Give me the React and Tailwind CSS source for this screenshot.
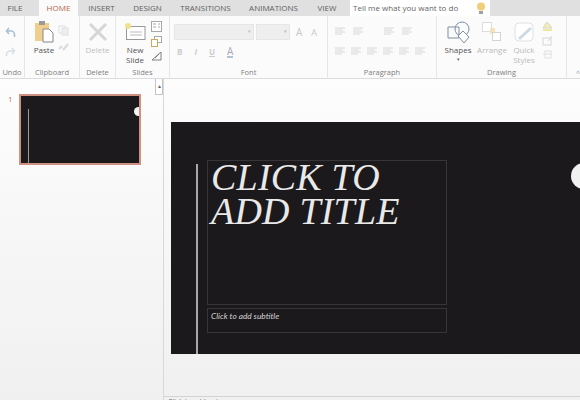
const F = { fontFamily: '"Open Sans","Noto Sans",sans-serif' };

function Tab({ children, active, w, cls = "" }) {
  return (
    <div className={"flex items-center justify-center h-full text-[8px] " + (active ? "bg-[#fbfbfb] text-[#b5634c] " : "text-[#5f5f5f] ") + cls} style={{ width: w }}>
      {children}
    </div>
  );
}

function Group({ w, label, children, last }) {
  return (
    <div className={"relative flex flex-col h-full shrink-0 " + (last ? "" : "border-r border-[#e6e6e6]")} style={{ width: w }}>
      <div className="flex-1 min-h-0 flex">{children}</div>
      <div className="h-[11px] shrink-0 text-center text-[7.5px] leading-[11px] text-[#808080]">{label}</div>
    </div>
  );
}

const Big = ({ children, label, w = 30, color = "text-[#555]", caret }) => (
  <div className="flex flex-col items-center pt-[4px] shrink-0" style={{ width: w }}>
    <div className="h-[24px] shrink-0 flex items-center justify-center">{children}</div>
    <div className={"text-[8px] leading-[10px] text-center mt-[1px] shrink-0 " + color}>{label}</div>
    {caret && <div className="text-[5px] leading-[8px] text-[#666] shrink-0">▾</div>}
  </div>
);

const Bars = ({ c = "#d8d8d8" }) => (
  <svg width="10" height="8" viewBox="0 0 10 8" stroke={c} strokeWidth="1"><path d="M0 1h10M0 3h8M0 5h10M0 7h7" /></svg>
);

export default function App() {
  return (
    <div className="w-[580px] h-[400px] overflow-hidden flex flex-col bg-[#f1f1f1]" style={F}>
      <div className="h-[16px] shrink-0 bg-[#e0e0e0] flex items-stretch">
        <Tab w={30}>FILE</Tab>
        <div className="w-[9px]" />
        <Tab active w={39}>HOME</Tab>
        <Tab w={47}>INSERT</Tab>
        <Tab w={45}>DESIGN</Tab>
        <Tab w={71}>TRANSITIONS</Tab>
        <Tab w={65}>ANIMATIONS</Tab>
        <Tab w={42}>VIEW</Tab>
        <div className="w-[2px]" />
        <div className="w-[140px] bg-white flex items-center justify-between pl-[3px] pr-[4px] text-[8px] text-[#666]">
          <span>Tell me what you want to do</span>
          <svg width="10" height="13" viewBox="0 0 10 13"><circle cx="5" cy="4.500" r="4" fill="#f2cd7a" /><rect x="3" y="9" width="4" height="3" fill="#a0a0a0" /></svg>
        </div>
      </div>

      <div className="h-[63px] shrink-0 bg-[#fbfbfb] border-b border-[#dcdcdc] flex">
        <Group w={25} label="Undo">
          <div className="w-[20px] flex flex-col items-center pt-[11px] gap-[8px]">
            <svg width="11" height="11" viewBox="0 0 11 11" fill="none" stroke="#a9c0d0" strokeWidth="1.600"><path d="M4 1 1.500 4 4 7M2 4h4a3.500 3.500 0 0 1 3.500 3.500V10" /></svg>
            <svg width="11" height="11" viewBox="0 0 11 11" fill="none" stroke="#d5e0e8" strokeWidth="1.600"><path d="M7 2 9.500 5 7 8M9 5H5a3.500 3.500 0 0 0-3.500 3.500V10" /></svg>
          </div>
        </Group>
        <Group w={55} label="Clipboard">
          <div className="flex pl-[5px]">
            <Big label="Paste" w={28}>
              <svg width="20" height="22" viewBox="0 0 20 22"><rect x="1" y="2" width="14" height="18" fill="#f0cf8e" /><rect x="5" y="0" width="6" height="4" fill="#9a9a9a" /><path d="M9 8h6l4 4v9H9z" fill="#fff" stroke="#888" /></svg>
            </Big>
            <div className="flex flex-col items-center pt-[9px] gap-[7px] pl-[0px]">
              <svg width="11" height="11" viewBox="0 0 11 11" fill="none" stroke="#e0e0e0"><rect x="1" y="1" width="6" height="7" /><rect x="4" y="3" width="6" height="7" fill="#eee" /></svg>
              <svg width="11" height="9" viewBox="0 0 11 9" fill="none" stroke="#dadada" strokeWidth="2"><path d="M1 6 4 3M5 7l5-6" /></svg>
            </div>
          </div>
        </Group>
        <Group w={36} label="Delete">
          <div className="w-full flex justify-center">
            <Big label="Delete" color="text-[#c0c0c0]">
              <svg width="20" height="18" viewBox="0 0 20 18" stroke="#d6d6d6" strokeWidth="3"><path d="M2 1 18 17M18 1 2 17" /></svg>
            </Big>
          </div>
        </Group>
        <Group w={54} label="Slides">
          <div className="flex pl-[7px]">
            <Big label={<>New<br />Slide</>} w={24}>
              <svg width="21" height="20" viewBox="0 0 21 20"><rect x="1.500" y="4.500" width="18.500" height="13" fill="#fff" stroke="#999" /><path d="M5 10h12M5 13h12" stroke="#bbb" /><circle cx="3" cy="4" r="3" fill="#f3e08e" /></svg>
            </Big>
            <div className="flex flex-col items-center pt-[5px] gap-[3px] pl-[4px]">
              <svg width="11" height="11" viewBox="0 0 11 11" fill="#fff" stroke="#a8a8a8"><rect x=".5" y=".5" width="10" height="10" /><path d="M2 3h3M2 6h3M7 3h2M7 6h2" /></svg>
              <svg width="11" height="12" viewBox="0 0 11 12" fill="#fff" stroke="#a8a8a8"><rect x="3.500" y="1.500" width="7" height="6" /><rect x=".5" y="4.500" width="6" height="7" stroke="#cca860" /></svg>
              <svg width="11" height="11" viewBox="0 0 11 11" fill="none" stroke="#808080"><path d="M1 10h9V2z" /><path d="M4 8 8 4" /></svg>
            </div>
          </div>
        </Group>
        <Group w={158} label="Font">
          <div className="flex flex-col pl-[4px] pt-[8px] gap-[6px]">
            <div className="flex items-center">
              <div className="w-[80px] h-[16px] border border-[#e6e6e6] bg-[#eeeeee] flex items-center justify-end pr-[2px] text-[5px] text-[#bbb]">▾</div>
              <div className="w-[34px] h-[16px] border border-[#e6e6e6] bg-[#eeeeee] ml-[2px] flex items-center justify-end pr-[2px] text-[5px] text-[#bbb]">▾</div>
              <span className="ml-[6px] text-[10px] text-[#c8c8c8] leading-none">A</span>
              <span className="ml-[9px] text-[9px] text-[#c8c8c8] leading-none">A</span>
            </div>
            <div className="flex items-center gap-[12px] pl-[3px] text-[8px] font-bold text-[#cdcdcd] leading-none">
              <span>B</span>
              <span className="italic">I</span>
              <span className="underline">U</span>
              <span className="text-[#a9a9b5] text-[10px] font-normal border-b-2 border-[#b0c2d4] leading-[10px]">A</span>
            </div>
          </div>
        </Group>
        <Group w={109} label="Paragraph">
          <div className="flex flex-col pl-[7px] pt-[11px] gap-[12px]">
            <div className="flex gap-[8px]"><Bars /><Bars /><div className="w-[5px]" /><Bars /><Bars /></div>
            <div className="flex gap-[6px]"><Bars /><Bars /><Bars /><Bars /><Bars /><Bars /></div>
          </div>
        </Group>
        <Group w={130} label="Drawing">
          <div className="flex pl-[3px]">
            <Big label="Shapes" w={36} caret>
              <svg width="23" height="23" viewBox="0 0 23 23" fill="none" stroke="#7c8fa3" strokeWidth="1"><path d="M1 6h11v11H1z" /><circle cx="15" cy="8" r="7" /><path d="m11 15 5-5 6 6-5 6z" fill="#fff" /></svg>
            </Big>
            <Big label="Arrange" w={32} color="text-[#bababa]">
              <svg width="20" height="20" viewBox="0 0 20 20"><rect x=".5" y=".5" width="9" height="9" fill="#fff" stroke="#dcdcdc" /><rect x="8" y="6" width="5" height="6" fill="#f6e3bc" /><rect x="10.500" y="10.500" width="8" height="8" fill="#fff" stroke="#d4d4d4" /></svg>
            </Big>
            <Big label={<>Quick<br />Styles</>} w={32} color="text-[#bababa]">
              <svg width="20" height="21" viewBox="0 0 20 21"><rect x="1" y="1" width="18" height="18" rx="4" fill="#fff" stroke="#e0e0e0" /><path d="m5 17 12-11" stroke="#cbdae6" strokeWidth="3" /></svg>
            </Big>
            <div className="flex flex-col items-center pt-[5px] gap-[3px] pl-[2px]">
              <svg width="11" height="11" viewBox="0 0 11 11"><path d="M5 1 10 7H1z" fill="#f6efaa" stroke="#d4d4d4" /><rect x="1" y="8" width="9" height="2" fill="#efe9a0" /></svg>
              <svg width="11" height="11" viewBox="0 0 11 11" fill="none" stroke="#d6d6d6"><rect x="1" y="3" width="8" height="7" /><path d="m6 6 4-5" /></svg>
              <svg width="11" height="11" viewBox="0 0 11 11" fill="none" stroke="#e0e0e0"><rect x="3" y="2" width="6" height="7" /><path d="M1 5h9" /></svg>
            </div>
          </div>
        </Group>
        <div className="relative flex-1">
          <span className="absolute left-[9px] bottom-[1px] text-[7px] text-[#999] leading-none">^</span>
        </div>
      </div>

      <div className="flex-1 min-h-0 flex bg-gradient-to-b from-[#fdfdfd] to-[#f0f0f0]">
        <div className="w-[164px] shrink-0 border-r border-[#d8d8d8] flex">
          <div className="w-[155px] flex pt-[15px] items-start">
            <span className="w-[19px] pl-[8px] text-[8px] leading-[10px] text-[#c0715a]">1</span>
            <div className="w-[122px] h-[71px] border-2 border-[#cf9282] bg-[#1c1a1c] relative overflow-hidden flex">
              <div className="w-[1px] h-full mt-[13px] ml-[7px] bg-[#9a9a9a]" />
              <div className="absolute right-[-4px] top-[11px] w-[9px] h-[9px] rounded-full bg-[#f4f4f4]" />
            </div>
          </div>
          <div className="w-[8px]">
            <div className="h-[16px] w-full border-b border-x border-[#c4c4c4] bg-white flex items-center justify-center text-[6px] text-[#666]">▴</div>
          </div>
        </div>

        <div className="flex-1 min-w-0 pt-[43px] flex flex-col">
          <div className="h-[232px] w-[409px] ml-[7px] bg-[#1b191b] relative shrink-0 pl-[25px] pt-[38px] flex overflow-hidden">
            <div className="w-[2px] h-[190px] mt-[4px] bg-[#a8a8a8]" />
            <div className="ml-[9px] flex flex-col w-[240px]">
              <div className="h-[145px] border border-[#373537] pl-[3px] shrink-0">
                <div className="text-[38px] leading-[34px] italic tracking-[0.2px] text-[#e9e9e9] -mt-[1px]" style={{ fontFamily: '"Liberation Serif",serif' }}>
                  <div>CLICK TO</div>
                  <div>ADD TITLE</div>
                </div>
              </div>
              <div className="h-[25px] mt-[3px] border border-[#373537] pl-[3px] text-[8.300px] italic leading-[14px] text-[#d5d5d5] shrink-0" style={{ fontFamily: 'Lato,sans-serif' }}>
                Click to add subtitle
              </div>
            </div>
            <div className="absolute left-[400px] top-[41px] w-[26px] h-[26px] rounded-full bg-[#f1f1f1]" />
          </div>
          <div className="flex-1" />
          <div className="h-[4px] border-t border-[#d4d4d4] pl-[4px] text-[7px] leading-[10px] text-[#666] overflow-hidden">Click to add notes</div>
        </div>
      </div>
    </div>
  );
}
